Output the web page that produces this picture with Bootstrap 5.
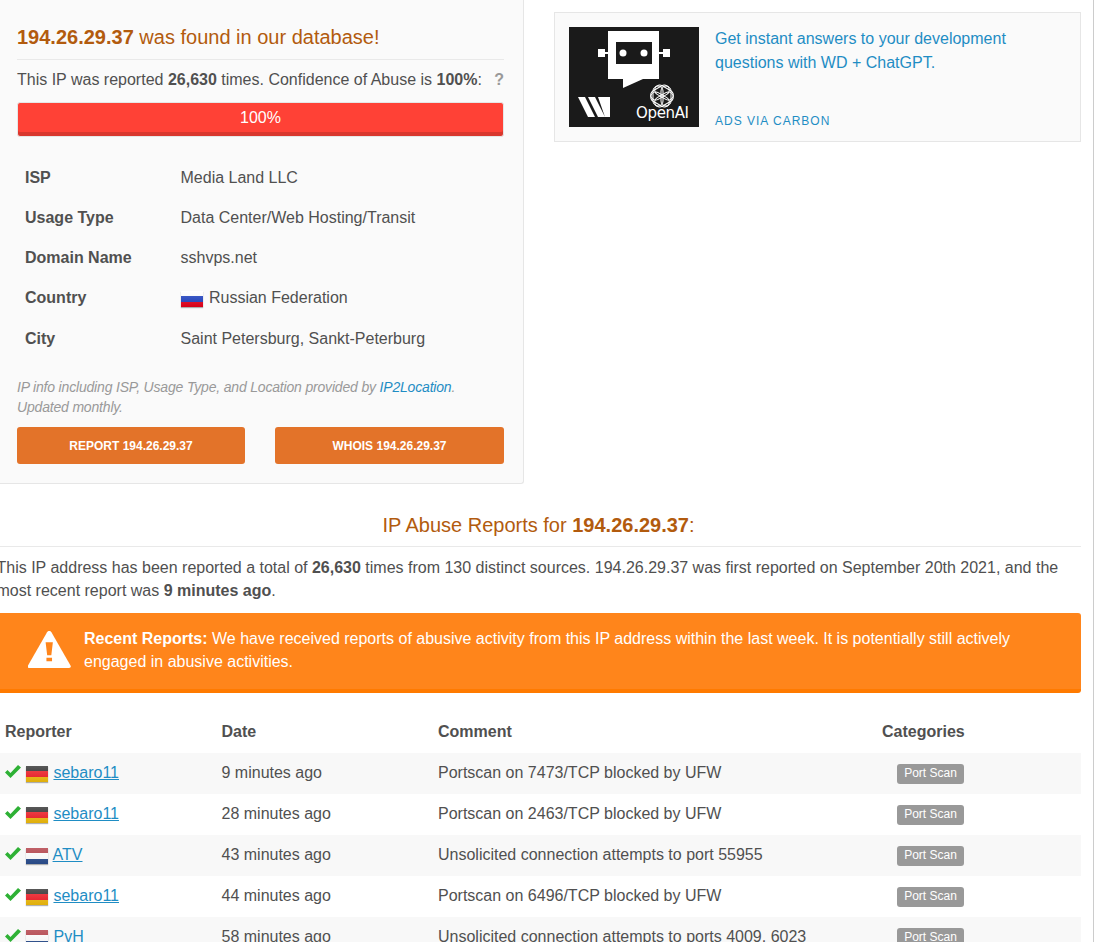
<!DOCTYPE html>
<html lang="en">
<head>
<meta charset="utf-8">
<title>AbuseIPDB</title>
<link href="https://cdn.jsdelivr.net/npm/bootstrap@5.3.0/dist/css/bootstrap.min.css" rel="stylesheet">
<style>
html,body{height:942px;overflow:hidden}
body{font-family:"Liberation Sans",Arial,sans-serif;font-size:16px;line-height:24px;color:#505050;background:#fff}
.shell{height:942px;overflow:hidden;border-right:1px solid #ccc;padding-right:12px;box-sizing:content-box;width:1081px}
.top{display:grid;grid-template-columns:524px 527px;column-gap:30px}
.panel{height:484px;background:#fafafa;border:1px solid #e6e6e6;border-top:0;border-left:0;border-bottom-right-radius:3px;padding:0 19px 0 17px}
.found{color:#b25b0e;font-size:20px;line-height:24px;padding-top:25px;padding-bottom:10px;border-bottom:1px solid #e9e9e9;margin:0;font-weight:400}
.found b,.rep-title b{font-weight:700}
.conf{display:flex;justify-content:space-between;margin-top:8px;height:24px}
.qmark{color:#999;font-weight:700}
.meter{margin-top:10px;height:35px;background:#ff4136;border:1px solid #e6e6e6;border-radius:3px;box-shadow:inset 0 -4px 0 #d9372d;color:#fff;text-align:center;line-height:29px;padding:0}
.facts{margin:20.6px 0 0 8px;display:grid;grid-template-columns:155.5px 1fr;grid-auto-rows:40.25px}
.facts dt{font-weight:700;margin:0;line-height:40px;height:40px}
.facts dd{margin:0;line-height:40px;height:40px}
.facts .flag{margin-right:2px}
.note{margin:0;padding-top:18.15px;font-style:italic;color:#999;font-size:14px;line-height:20px;letter-spacing:-.18px}
.note a{color:#1f8dc4;text-decoration:none}
.acts{display:grid;grid-template-columns:228px 229px;column-gap:30px;margin-top:10px}
.btn-ip{background:#e37329;color:#fff;border:0;border-radius:3px;height:37px;font-size:12px;font-weight:700;line-height:38px;padding:0}
.btn-ip:hover{background:#e37329;color:#fff}
.ad{margin-top:12px;height:130px;background:#fafafa;border:1px solid #e6e6e6;display:flex;padding:14px}
.ad-img{width:130px;height:100px;background:#1a1a1a;flex:none;display:block}
.ad-txt{margin-left:16px;display:flex;flex-direction:column;color:#1f8dc4}
.ad-txt span:first-child{flex:1}
.ad-via{font-size:12px;line-height:16px;letter-spacing:1px;margin-bottom:-2px}
.rep-title{text-align:center;color:#b25b0e;font-size:20px;line-height:24px;font-weight:400;margin:29px 0 0;padding-bottom:9px;border-bottom:1px solid #e9e9e9;text-indent:-4px}
.intro{margin:9px 0 0 -3.5px;line-height:23px}
.warn{margin-top:11px;height:80px;background:#ff851b;border-bottom:4px solid #ff7a00;border-radius:0 3px 3px 0;color:#fff;display:flex;align-items:flex-start;padding:14px 40px 0 28px;line-height:23px}
.warn svg{flex:none;margin:4px 13px 0 0}
.warn b{font-weight:700}
.reports{width:100%;table-layout:fixed;border-collapse:collapse;margin-top:19px}
.c-a{width:216.5px}
.c-c{width:444px}
.reports th{font-weight:700;height:41px;padding:0 0 2px 5px;vertical-align:middle}
.reports td{height:41px;padding:0 0 2px 5px;vertical-align:middle;white-space:nowrap}
.reports tbody tr:nth-child(odd) td{background:#f8f8f8}
.reports a{color:#1f8dc4;text-decoration:underline}
.flag{display:inline-block;width:22px;height:16px;vertical-align:-4px;margin-right:1px;box-shadow:0 1px 1px rgba(0,0,0,.3)}
.ru{background:linear-gradient(rgba(255,255,255,.2),rgba(0,0,0,.05)),linear-gradient(#fff 0 33%,#1c3fbf 33% 66%,#e2001a 66%)}
.de{background:linear-gradient(rgba(255,255,255,.2),rgba(0,0,0,.05)),linear-gradient(#2e2e2e 0 33%,#ee1c25 33% 66%,#ecb80b 66%)}
.nl{background:linear-gradient(rgba(255,255,255,.15),rgba(0,0,0,.05)),linear-gradient(#b5454d 0 33%,#fff 33% 66%,#2a4d8c 66%)}
.tick{display:inline-block;vertical-align:0;margin-right:5px}
.tag{display:inline-block;background:#999;color:#fff;font-size:12px;line-height:19px;height:20px;width:67px;text-align:center;border-radius:3px;font-weight:400;margin-left:15px;position:relative;top:-1px}
</style>
</head>
<body>
<div class="shell">
  <div class="top">
    <section class="panel">
      <h3 class="found"><b>194.26.29.37</b> was found in our database!</h3>
      <div class="conf"><span>This IP was reported <b>26,630</b> times. Confidence of Abuse is <b>100%</b>:</span><span class="qmark">?</span></div>
      <div class="meter">100%</div>
      <dl class="facts">
        <dt>ISP</dt><dd>Media Land LLC</dd>
        <dt>Usage Type</dt><dd>Data Center/Web Hosting/Transit</dd>
        <dt>Domain Name</dt><dd>sshvps.net</dd>
        <dt>Country</dt><dd><i class="flag ru"></i> Russian Federation</dd>
        <dt>City</dt><dd>Saint Petersburg, Sankt-Peterburg</dd>
      </dl>
      <p class="note">IP info including ISP, Usage Type, and Location provided by <a href="#">IP2Location</a>. Updated monthly.</p>
      <div class="acts">
        <a class="btn btn-ip" href="#">REPORT 194.26.29.37</a>
        <a class="btn btn-ip" href="#">WHOIS 194.26.29.37</a>
      </div>
    </section>
    <aside class="ad">
      <svg class="ad-img" viewBox="0 0 130 100" aria-hidden="true">
        <rect width="130" height="100" fill="#1a1a1a"/>
        <path d="M39 4H90V52H74L54 61V52H39Z" fill="#fff"/>
        <rect x="47" y="15" width="36" height="22" fill="#1a1a1a"/>
        <circle cx="54" cy="26" r="3.500" fill="#fff"/><circle cx="75" cy="26" r="3.500" fill="#fff"/>
        <path d="M29 22h7v3h3v2h-3v3h-7zM90 25h4v-3h7v8h-7v-3h-4z" fill="#fff"/>
        <path d="M9 70h7l10 20h-7zM19 70h7l10 20h-7zM29 70h12v20h-5z" fill="#fff"/>
        <g fill="none" stroke="#fff" stroke-width="1">
          <rect x="-5" y="-10" width="10" height="20" rx="5" transform="translate(93 69) rotate(0) translate(4 0)"/>
          <rect x="-5" y="-10" width="10" height="20" rx="5" transform="translate(93 69) rotate(60) translate(4 0)"/>
          <rect x="-5" y="-10" width="10" height="20" rx="5" transform="translate(93 69) rotate(120) translate(4 0)"/>
          <rect x="-5" y="-10" width="10" height="20" rx="5" transform="translate(93 69) rotate(180) translate(4 0)"/>
          <rect x="-5" y="-10" width="10" height="20" rx="5" transform="translate(93 69) rotate(240) translate(4 0)"/>
          <rect x="-5" y="-10" width="10" height="20" rx="5" transform="translate(93 69) rotate(300) translate(4 0)"/>
        </g>
        <text x="67" y="91" fill="#fff" font-family="'DejaVu Sans',sans-serif" font-size="15" textLength="53">OpenAI</text>
      </svg>
      <div class="ad-txt">
        <span>Get instant answers to your development questions with WD + ChatGPT.</span>
        <span class="ad-via">ADS VIA CARBON</span>
      </div>
    </aside>
  </div>

  <h3 class="rep-title">IP Abuse Reports for <b>194.26.29.37</b>:</h3>
  <p class="intro">This IP address has been reported a total of <b>26,630</b> times from 130 distinct sources. 194.26.29.37 was first reported on September 20th 2021, and the most recent report was <b>9 minutes ago</b>.</p>

  <div class="warn">
    <svg width="43" height="37" viewBox="1 1 41.500 36" aria-hidden="true" preserveAspectRatio="none"><path d="M21.500 1c1 0 1.600.5 2.100 1.300L42 34.500c.8 1.400 0 2.500-1.400 2.500H2.400c-1.400 0-2.200-1.100-1.400-2.500L19.400 2.300C19.900 1.500 20.500 1 21.500 1z" fill="#fff"/><path d="M18 12h7l-1.500 12.500h-4zM18.800 27h5.400v3.500h-5.400z" fill="#ff851b"/></svg>
    <div><b>Recent Reports:</b> We have received reports of abusive activity from this IP address within the last week. It is potentially still actively engaged in abusive activities.</div>
  </div>

  <table class="reports">
    <colgroup><col class="c-a"><col class="c-a"><col class="c-c"><col></colgroup>
    <thead><tr><th>Reporter</th><th>Date</th><th>Comment</th><th>Categories</th></tr></thead>
    <tbody>
      <tr><td><svg class="tick" width="16" height="13" viewBox="0 0 16 13"><path d="M0 7.500L2.500 5L5.500 8L13 0L16 2.500L5.500 13Z" fill="#2eb135"/></svg><i class="flag de"></i> <a href="#">sebaro11</a></td><td>9 minutes ago</td><td>Portscan on 7473/TCP blocked by UFW</td><td><span class="tag">Port Scan</span></td></tr>
      <tr><td><svg class="tick" width="16" height="13" viewBox="0 0 16 13"><path d="M0 7.500L2.500 5L5.500 8L13 0L16 2.500L5.500 13Z" fill="#2eb135"/></svg><i class="flag de"></i> <a href="#">sebaro11</a></td><td>28 minutes ago</td><td>Portscan on 2463/TCP blocked by UFW</td><td><span class="tag">Port Scan</span></td></tr>
      <tr><td><svg class="tick" width="16" height="13" viewBox="0 0 16 13"><path d="M0 7.500L2.500 5L5.500 8L13 0L16 2.500L5.500 13Z" fill="#2eb135"/></svg><i class="flag nl"></i> <a href="#">ATV</a></td><td>43 minutes ago</td><td>Unsolicited connection attempts to port 55955</td><td><span class="tag">Port Scan</span></td></tr>
      <tr><td><svg class="tick" width="16" height="13" viewBox="0 0 16 13"><path d="M0 7.500L2.500 5L5.500 8L13 0L16 2.500L5.500 13Z" fill="#2eb135"/></svg><i class="flag de"></i> <a href="#">sebaro11</a></td><td>44 minutes ago</td><td>Portscan on 6496/TCP blocked by UFW</td><td><span class="tag">Port Scan</span></td></tr>
      <tr><td><svg class="tick" width="16" height="13" viewBox="0 0 16 13"><path d="M0 7.500L2.500 5L5.500 8L13 0L16 2.500L5.500 13Z" fill="#2eb135"/></svg><i class="flag nl"></i> <a href="#">PvH</a></td><td>58 minutes ago</td><td>Unsolicited connection attempts to ports 4009, 6023</td><td><span class="tag">Port Scan</span></td></tr>
    </tbody>
  </table>
</div>
<script src="https://cdn.jsdelivr.net/npm/bootstrap@5.3.0/dist/js/bootstrap.bundle.min.js"></script>
</body>
</html>
